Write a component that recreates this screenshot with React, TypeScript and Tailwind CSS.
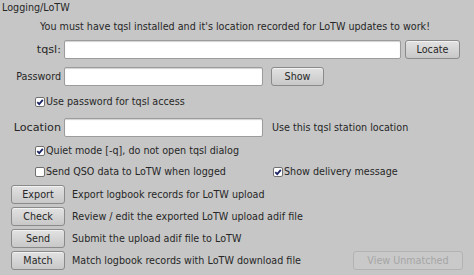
import React from "react";

function Check({ checked }: { checked: boolean }) {
    return (
        <span className="flex items-center justify-center w-[10px] h-[10px] bg-white border border-[#707070] rounded-[2px] shrink-0">
            {checked && (
                <svg width="8" height="8" viewBox="0 0 8 8">
                    <path d="M1.3 4.2 L3.2 6.1 L6.8 1.8" stroke="#1c2466" strokeWidth="1.8" fill="none" />
                </svg>
            )}
        </span>
    );
}

function CheckRow({ label, checked, className = "" }: { label: string; checked: boolean; className?: string }) {
    return (
        <div className={"flex items-center gap-[1px] h-[12px] " + className}>
            <Check checked={checked} />
            <span>{label}</span>
        </div>
    );
}

function Btn({ label, className = "", disabled = false }: { label: string; className?: string; disabled?: boolean }) {
    return (
        <div
            className={
                "flex items-center justify-center h-[19px] rounded-[3px] border shrink-0 " +
                (disabled
                    ? "border-[#b3b3b3] text-[#a6a6a6] bg-[#c9c9c9] "
                    : "border-[#8a8a8a] bg-gradient-to-b from-[#e2e2e2] to-[#c8c8c8] shadow-[inset_0_1px_0_#f2f2f2] ") +
                className
            }
        >
            {label}
        </div>
    );
}

function Field({ className = "" }: { className?: string }) {
    return (
        <div className={"h-[19px] bg-white border border-[#9c9c9c] rounded-[2px] shadow-[inset_0_1px_1px_rgba(0,0,0,0.18)] " + className} />
    );
}

const actions = [
    { label: "Export", text: "Export logbook records for LoTW upload" },
    { label: "Check", text: "Review / edit the exported LoTW upload adif file" },
    { label: "Send", text: "Submit the upload adif file to LoTW" },
];

export default function App() {
    return (
        <div className="w-[474px] h-[275px] bg-[#c6c6c6] text-[#262626] font-['DejaVu_Sans',sans-serif] text-[9.6px] leading-[12px] overflow-hidden">
            <div className="pl-[2px] pt-[2px] h-[14px]">Logging/LoTW</div>

            <div className="pl-[40px] mt-[7px] h-[12px]">
                You must have tqsl installed and it's location recorded for LoTW updates to work!
            </div>

            <div className="flex items-center mt-[7px]">
                <div className="w-[61px] text-right text-[11.2px]">tqsl:</div>
                <Field className="ml-[3px] w-[337px]" />
                <Btn label="Locate" className="ml-[4px] w-[55px]" />
            </div>

            <div className="flex items-center mt-[8px]">
                <div className="w-[61px] text-right">Password</div>
                <Field className="ml-[3px] w-[199px]" />
                <Btn label="Show" className="ml-[8px] w-[53px]" />
            </div>

            <CheckRow label="Use password for tqsl access" checked className="ml-[35px] mt-[10px]" />

            <div className="flex items-center mt-[10px]">
                <div className="w-[61px] text-right text-[11.2px]">Location</div>
                <Field className="ml-[3px] w-[199px] h-[18px]" />
                <span className="ml-[9px]">Use this tqsl station location</span>
            </div>

            <CheckRow label="Quiet mode [-q], do not open tqsl dialog" checked className="ml-[35px] mt-[8px]" />

            <div className="flex items-center mt-[9px]">
                <CheckRow label="Send QSO data to LoTW when logged" checked={false} className="ml-[35px] w-[238px]" />
                <CheckRow label="Show delivery message" checked />
            </div>

            <div className="flex flex-col gap-[3px] mt-[7px] pl-[11px] pr-[11px]">
                {actions.map((a) => (
                    <div key={a.label} className="flex items-center">
                        <Btn label={a.label} className="w-[54px]" />
                        <span className="ml-[7px]">{a.text}</span>
                    </div>
                ))}
                <div className="flex items-center">
                    <Btn label="Match" className="w-[54px]" />
                    <span className="ml-[7px] flex-1">Match logbook records with LoTW download file</span>
                    <Btn label="View Unmatched" disabled className="w-[110px]" />
                </div>
            </div>
        </div>
    );
}
